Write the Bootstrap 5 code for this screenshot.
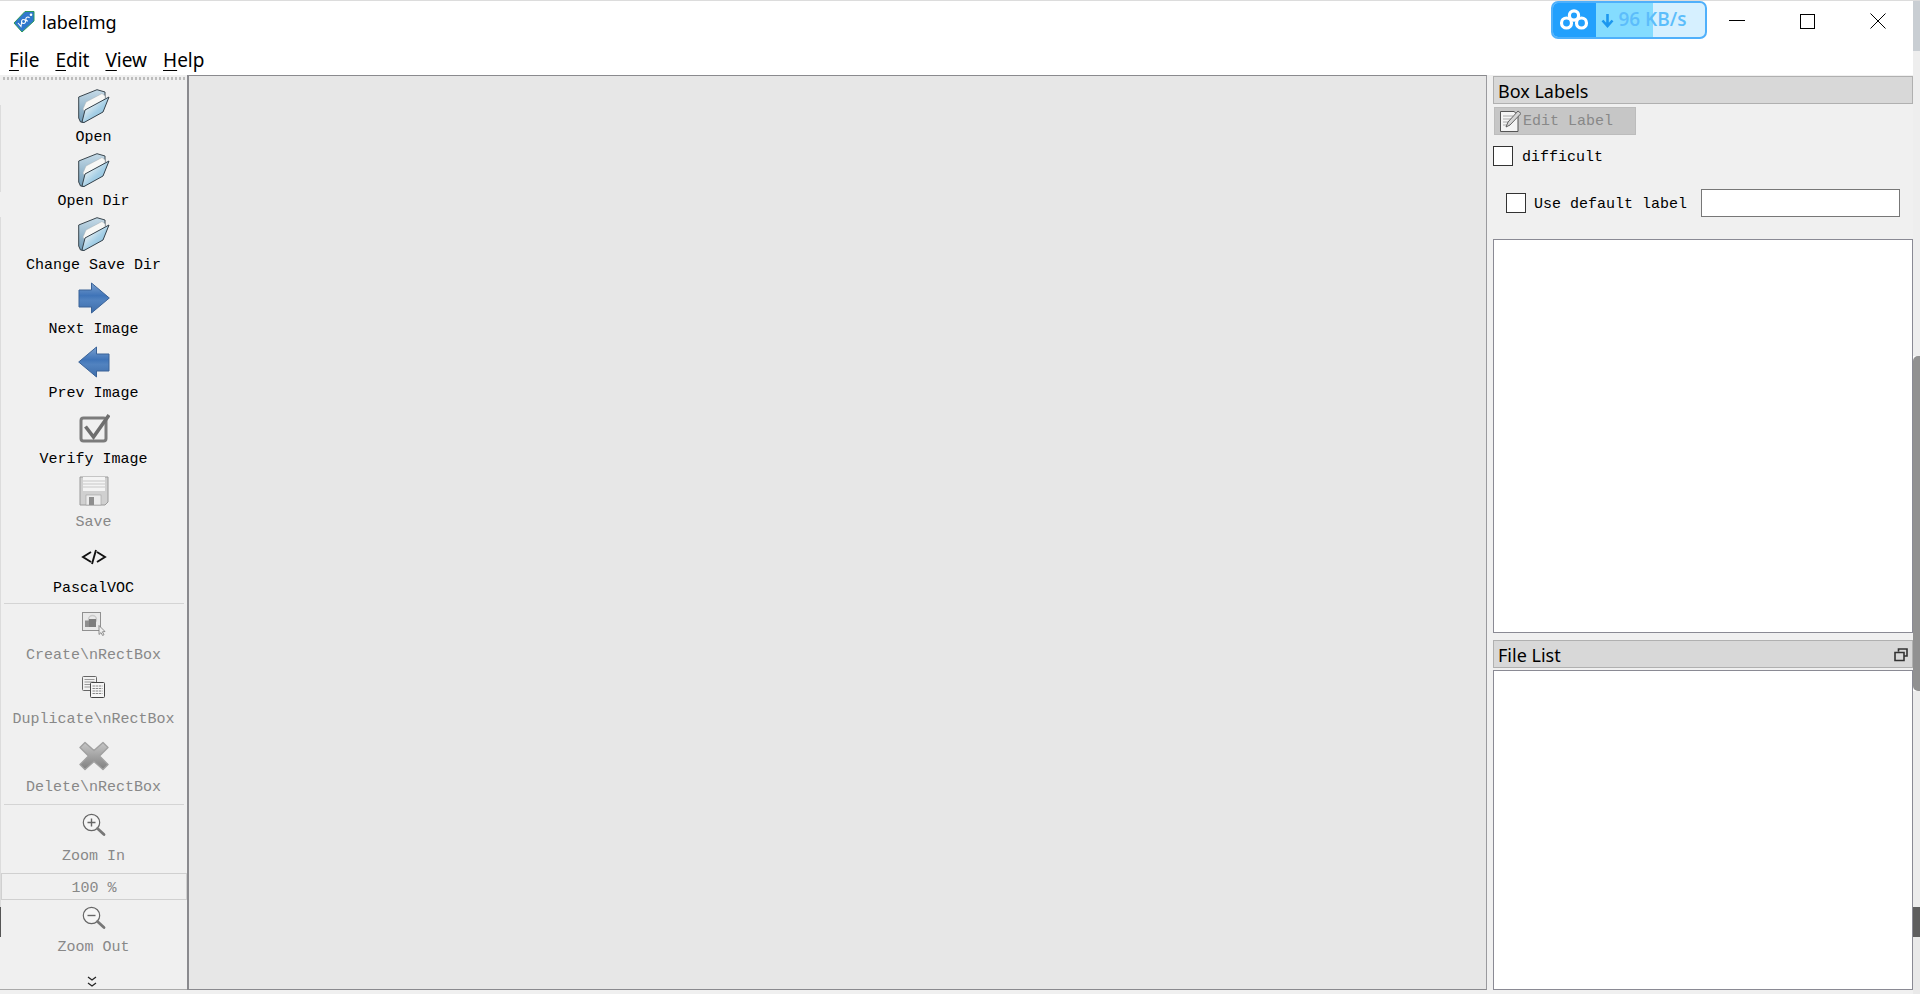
<!DOCTYPE html>
<html lang="en">
<head>
<meta charset="utf-8">
<title>labelImg</title>
<link href="https://cdn.jsdelivr.net/npm/bootstrap@5.3.0/dist/css/bootstrap.min.css" rel="stylesheet">
<style>
html,body{height:994px;overflow:hidden;background:#fff}
body{font-family:"Noto Sans",sans-serif;color:#000}
.app-shell{width:1920px;height:994px;border-top:1px solid #dcdcdc}
.app-main{width:1913px;height:993px;flex:none}
.edge-strip{width:7px;flex:none}
.es-a{height:50px;background:#c9ced3}.es-b{height:305px;background:#eeeeee}.es-c{height:335px;background:#919191;border-radius:5px 0 0 5px}
.es-d{height:216px;background:#ececec}.es-e{height:30px;background:#5e5e5e}.es-f{flex:1;background:#e9e9e9}
.title-row{height:40px;padding-left:13px;gap:7px;flex:none}
.app-title{font-size:18px;line-height:24px;padding-top:2px}
.logo-svg{width:22px;height:23px}
.menu-row{height:34px;padding:3px 0 0 9px;gap:16px;font-size:19px;line-height:24px;flex:none}
.menu-item u{text-underline-offset:3px}
.net-widget{width:156px;height:38px;border:2px solid #4fb0fb;border-radius:7px;margin-right:-5px;overflow:hidden;background:#d6f0ff;margin-top:-2px}
.net-logo{width:43px;background:#22a0fd}
.net-mid{width:57px;background:#84dcff}
.net-text{position:absolute;left:48px;top:2px;font-size:19px;line-height:28px;color:#5cbdfb;white-space:nowrap;font-family:"Open Sans",sans-serif;font-weight:600}
.win-btn{width:70.5px;height:40px}
.work-row{height:915px;background:#f0f0f0;flex:none;position:relative}
.tool-col{width:187px;padding-top:2px;font-family:"Liberation Mono",monospace;font-size:15px;line-height:20px;text-align:center;flex:none;border-bottom:1px solid #aaa}
.grip{height:3px;margin:0 0 6px 3px;width:184px;background:repeating-linear-gradient(90deg,#bdbdbd 0 2px,transparent 2px 4px);flex:none}
.tool{display:flex;flex-direction:column;align-items:center;color:#000;overflow:hidden;flex:none}
.tool-off{color:#888}
.tool-text{margin-top:2px}
.icon-zone{height:40px;display:flex;align-items:center;justify-content:center;flex:none}
.zone-short{height:36px}
.t63{height:63px}.t64{height:64px}.t65{height:65px}.t66{height:66px}.t68{height:68px}.t67{height:67px}
.tsep{height:1px;background:#d4d4d4;margin:0 3px 0 4px;flex:none}
.zoom-box{height:27px;margin-left:1px;border:1px solid #d0d0d0;color:#888;line-height:25px;padding-top:2px;flex:none}
.chev-row{margin-top:9px;height:14px;display:flex;justify-content:center;margin-left:-3px;flex:none}
.canvas-col{width:1300px;border-left:2px solid #8a8a8e;border-right:1px solid #9a9a9e;border-top:1px solid #8a8a8e;border-bottom:1px solid #8a8a8e;background:#e7e7e7;flex:none}
.right-col{width:426px;padding:1px 0 0 6px;flex:none}
.dock-head{height:28px;background:#d8d8d8;border:1px solid #b0b0b0;padding-left:4px;padding-top:1px;font-size:18px;line-height:26px;flex:none}
.edit-btn{width:142px;height:28px;margin:3px 0 0 1px;background:#c6c6c6;border:1px solid #bcbcbc;color:#888;font-family:"Liberation Mono",monospace;font-size:15px;padding:0 0 0 4px;gap:2px;flex:none}
.edit-text{padding-top:3px}
.mono-label{font-family:"Liberation Mono",monospace;font-size:15px;line-height:20px}
.mono-shift{padding-top:3px}
.chk{width:20px;height:20px;background:#fff;border:1px solid #333;flex:none}
.diff-row{margin-top:11px;gap:9px;height:20px;flex:none}
.def-row{margin-top:23px;padding-left:13px;gap:8px;height:28px;flex:none}
.def-input{width:199px;height:28px;border:1px solid #777;background:#fff;margin-left:6px;padding:0;border-radius:0}
.list-box{border:1px solid #8a8a94;background:#fff;flex:none}
.lb-1{height:394px;margin-top:22px}
.lb-2{height:320px;margin-top:2px}
.head-2{margin-top:7px}
.bottom-gap{height:4px;background:#f0f0f0;flex:none}
.edge-mark{position:absolute;left:0;width:1px;background:#dcdcdc}
.em-a{top:30px;height:87px}.em-b{top:142px;height:690px}.em-c{top:832px;height:30px;background:#555}
</style>
</head>
<body>
<svg width="0" height="0" class="d-block">
<defs>
<linearGradient id="fb" x1="0" y1="0" x2="0" y2="1"><stop offset="0" stop-color="#c6dbe8"/><stop offset="1" stop-color="#6f9ab6"/></linearGradient>
<linearGradient id="ff" x1="0" y1="0" x2="1" y2="1"><stop offset="0" stop-color="#eef3f5"/><stop offset=".35" stop-color="#d4e6ef"/><stop offset=".55" stop-color="#a5cfe6"/><stop offset="1" stop-color="#7fb5d4"/></linearGradient>
<linearGradient id="ab" x1="0" y1="0" x2="0" y2="1"><stop offset="0" stop-color="#7aa0cf"/><stop offset=".42" stop-color="#3f74b8"/><stop offset=".58" stop-color="#5283c0"/><stop offset="1" stop-color="#3d6daa"/></linearGradient>
<linearGradient id="xg" x1="0" y1="0" x2="0" y2="1"><stop offset="0" stop-color="#c6c6c6"/><stop offset="1" stop-color="#808080"/></linearGradient>
<symbol id="i-folder" viewBox="0 0 32 34">
<path d="M.7 8 L19 .7 L27 3 L27 9 L6 33.5 L2.5 33 L.7 29Z" fill="url(#fb)" stroke="#39454d" stroke-width="1"/>
<path d="M5 20 L8 13 L24 4.5 L27 7 L27 10 L7 24Z" fill="#f8f8f6" stroke="#a8b0b4" stroke-width=".5"/>
<path d="M4 33 L7 21 L31 8 L25 23 L6 33.5Z" fill="url(#ff)" stroke="#33404a" stroke-width="1" stroke-linejoin="round"/>
</symbol>
<symbol id="i-next" viewBox="0 0 32 32">
<path d="M1 8 H13.5 V1 L31.3 16 L13.5 31 V25 H1Z" fill="url(#ab)" stroke="#3a6297" stroke-width="1"/>
</symbol>
<symbol id="i-prev" viewBox="0 0 32 32">
<path d="M31 8 H18.5 V1 L.7 16 L18.5 31 V25 H31Z" fill="url(#ab)" stroke="#3a6297" stroke-width="1"/>
</symbol>
<symbol id="i-verify" viewBox="0 0 32 32">
<rect x="3" y="6" width="25" height="23" rx="2.5" fill="none" stroke="#7b7b7b" stroke-width="3"/>
<path d="M7.5 14.5 L15.5 25 L31 3" fill="none" stroke="#6e6e6e" stroke-width="3.6"/>
</symbol>
<symbol id="i-save" viewBox="0 0 30 30">
<path d="M1 1 H29 V26 L26 29 H1Z" fill="#d0d0d0" stroke="#9a9a9a"/>
<rect x="4" y="1" width="22" height="14" fill="#f4f4f4"/>
<path d="M4 5H26M4 8H26M4 11H26" stroke="#c8c8c8"/>
<rect x="7" y="19" width="15" height="10" fill="#ececec" stroke="#a0a0a0" stroke-width=".6"/>
<rect x="10" y="21" width="5" height="8" fill="#8e8e8e"/>
</symbol>
<symbol id="i-create" viewBox="0 0 24 24">
<rect x=".5" y=".5" width="18" height="18" fill="#e9e9e9" stroke="#333" stroke-dasharray="1 1"/>
<circle cx="10.5" cy="7.5" r="4" fill="none" stroke="#c9c9c9" stroke-width="1.4"/>
<path d="M3 8.5 H10 V15 H3Z" fill="#8f8f8f"/><path d="M7 7 H14 V15 H7Z" fill="#7d7d7d"/>
<path d="M17 13.5 V22.5 L19 20.6 L20.6 23.5 L22 22.7 L20.4 19.8 L23 19.5Z" fill="#eee" stroke="#777" stroke-width=".8"/>
</symbol>
<symbol id="i-dup" viewBox="0 0 24 24">
<rect x=".5" y=".5" width="14" height="14" rx="1" fill="#f2f2f2" stroke="#666"/>
<path d="M2.5 3.5h10M2.5 6h10M2.5 8.5h10M2.5 11h10" stroke="#999"/>
<rect x="8.5" y="6.5" width="14" height="15" rx="1" fill="#f6f6f6" stroke="#444"/>
<path d="M10.5 10h10M10.5 12.5h10M10.5 15h10M10.5 17.5h10" stroke="#888" stroke-dasharray="2.4 .7"/>
</symbol>
<symbol id="i-x" viewBox="0 0 30 30">
<path d="M6 1.5 L15 9.5 L24 1.5 L29 6.5 L20.5 15 L29 23.5 L24 28.5 L15 20.5 L6 28.5 L1 23.5 L9.5 15 L1 6.5Z" fill="url(#xg)" stroke="#a0a0a0" stroke-width="1.4" stroke-linejoin="round"/>
</symbol>
<symbol id="i-zoom" viewBox="0 0 24 24">
<circle cx="9.5" cy="9.5" r="8.2" fill="#f5f5f5" stroke="#666" stroke-width="1.2"/>
<path d="M15.5 15.5 L22 21.5" stroke="#777" stroke-width="2.8" stroke-linecap="round"/>
</symbol>
</defs>
</svg>
<div class="app-shell d-flex">
  <div class="app-main d-flex flex-column">
    <div class="title-row d-flex align-items-center">
      <svg class="logo-svg" viewBox="0 0 22 23"><path d="M1 13 L12 1.5 H21 V11 L9 22Z" fill="#2f78cc" stroke="#2d9a5a" stroke-width="1"/><circle cx="18" cy="4.8" r="1.3" fill="#fff"/><path d="M5 13 L8 16.5 L8.7 11.5M10.5 9.5a2 2 0 1 0 .1 0M16.5 8 a2 2 0 1 0 -1.5 3" fill="none" stroke="#fff" stroke-width="1.1"/></svg>
      <span class="app-title">labelImg</span>
      <div class="ms-auto d-flex align-items-center">
        <div class="net-widget d-flex position-relative">
          <div class="net-logo d-flex align-items-center justify-content-center">
            <svg width="30" height="22" viewBox="0 0 30 22"><g fill="none" stroke="#fff" stroke-width="3.2"><circle cx="15" cy="6.5" r="4.6"/><circle cx="7.5" cy="14" r="5"/><circle cx="22.5" cy="14" r="5"/></g></svg>
          </div>
          <div class="net-mid"></div>
          <span class="net-text"><svg width="13" height="15" viewBox="0 0 13 15"><path d="M6.5 1V12M1.5 7.5L6.5 13L11.5 7.5" fill="none" stroke="#1c97ef" stroke-width="2.6"/></svg> 96 KB/s</span>
        </div>
        <div class="win-btn d-flex align-items-center justify-content-center"><svg width="16" height="2"><path d="M0 .5H16" stroke="#000"/></svg></div>
        <div class="win-btn d-flex align-items-center justify-content-center"><svg width="15" height="15"><rect x=".5" y=".5" width="14" height="14" fill="none" stroke="#000"/></svg></div>
        <div class="win-btn d-flex align-items-center justify-content-center"><svg width="16" height="16"><path d="M.5.5L15.5 15.5M15.5.5L.5 15.5" stroke="#000"/></svg></div>
      </div>
    </div>
    <div class="menu-row d-flex align-items-center">
      <span class="menu-item"><u>F</u>ile</span><span class="menu-item"><u>E</u>dit</span><span class="menu-item"><u>V</u>iew</span><span class="menu-item"><u>H</u>elp</span>
    </div>
    <div class="work-row d-flex">
      <div class="tool-col d-flex flex-column">
        <div class="grip"></div>
        <div class="tool t64"><div class="icon-zone"><svg width="32" height="34"><use href="#i-folder"/></svg></div><div class="tool-text">Open</div></div>
        <div class="tool t64"><div class="icon-zone"><svg width="32" height="34"><use href="#i-folder"/></svg></div><div class="tool-text">Open Dir</div></div>
        <div class="tool t64"><div class="icon-zone"><svg width="32" height="34"><use href="#i-folder"/></svg></div><div class="tool-text">Change Save Dir</div></div>
        <div class="tool t64"><div class="icon-zone"><svg width="32" height="32"><use href="#i-next"/></svg></div><div class="tool-text">Next Image</div></div>
        <div class="tool t66"><div class="icon-zone"><svg width="32" height="32"><use href="#i-prev"/></svg></div><div class="tool-text">Prev Image</div></div>
        <div class="tool t63"><div class="icon-zone"><svg width="32" height="32"><use href="#i-verify"/></svg></div><div class="tool-text">Verify Image</div></div>
        <div class="tool tool-off t66"><div class="icon-zone"><svg width="30" height="30"><use href="#i-save"/></svg></div><div class="tool-text">Save</div></div>
        <div class="tool t66"><div class="icon-zone"><svg width="28" height="16" viewBox="0 0 28 16"><path d="M11 3L3 8L11 13M17 3L25 8L17 13M16 1L12 15" fill="none" stroke="#111" stroke-width="1.9"/></svg></div><div class="tool-text">PascalVOC</div></div>
        <div class="tsep"></div>
        <div class="tool tool-off t64"><div class="icon-zone"><svg width="24" height="24"><use href="#i-create"/></svg></div><div class="tool-text">Create\nRectBox</div></div>
        <div class="tool tool-off t68"><div class="icon-zone"><svg width="24" height="24"><use href="#i-dup"/></svg></div><div class="tool-text">Duplicate\nRectBox</div></div>
        <div class="tool tool-off t68"><div class="icon-zone"><svg width="30" height="30"><use href="#i-x"/></svg></div><div class="tool-text">Delete\nRectBox</div></div>
        <div class="tsep"></div>
        <div class="tool tool-off t68"><div class="icon-zone"><svg width="24" height="24"><use href="#i-zoom"/><path d="M5.5 9.5h8M9.5 5.5v8" stroke="#666" stroke-width="1.4"/></svg></div><div class="tool-text">Zoom In</div></div>
        <div class="zoom-box">100 %</div>
        <div class="tool tool-off t67"><div class="icon-zone zone-short"><svg width="24" height="24"><use href="#i-zoom"/><path d="M5.5 9.5h8" stroke="#666" stroke-width="1.4"/></svg></div><div class="tool-text">Zoom Out</div></div>
        <div class="chev-row"><svg width="10" height="12" viewBox="0 0 10 12"><path d="M1 1L5 4L9 1M1 7L5 10L9 7" fill="none" stroke="#222" stroke-width="1.2"/></svg></div>
      </div>
      <div class="canvas-col"></div>
      <div class="right-col d-flex flex-column">
        <div class="dock-head">Box Labels</div>
        <div class="edit-btn d-flex align-items-center">
          <svg width="22" height="24" viewBox="0 0 22 24"><path d="M1.5 2.5 H15 L19 6 V22.5 H1.5Z" fill="#f4f4f4" stroke="#555"/><path d="M4 7h10M4 10h8M4 13h7M4 16h7" stroke="#aaa"/><path d="M7 18 L9 13 L19 2 L22 4.5 L11 16Z" fill="#d5d5d5" stroke="#555" stroke-width=".9"/></svg>
          <span class="edit-text">Edit Label</span>
        </div>
        <div class="diff-row d-flex align-items-center mono-label"><span class="chk"></span><span class="mono-shift">difficult</span></div>
        <div class="def-row d-flex align-items-center mono-label"><span class="chk"></span><span class="mono-shift">Use default label</span><input class="def-input" type="text" aria-label="default label"></div>
        <div class="list-box lb-1"></div>
        <div class="dock-head head-2 d-flex align-items-center justify-content-between"><span>File List</span>
          <svg class="me-1" width="14" height="14" viewBox="0 0 14 14"><path d="M4.5 3.5V1H13V8H10M1 4.5H10V12.5H1Z" fill="none" stroke="#333" stroke-width="1.6"/></svg>
        </div>
        <div class="list-box lb-2"></div>
      </div>
      <span class="edge-mark em-a"></span><span class="edge-mark em-b"></span><span class="edge-mark em-c"></span>
    </div>
    <div class="bottom-gap"></div>
  </div>
  <div class="edge-strip d-flex flex-column"><div class="es-a"></div><div class="es-b"></div><div class="es-c"></div><div class="es-d"></div><div class="es-e"></div><div class="es-f"></div></div>
</div>
<script src="https://cdn.jsdelivr.net/npm/bootstrap@5.3.0/dist/js/bootstrap.bundle.min.js"></script>
</body>
</html>
